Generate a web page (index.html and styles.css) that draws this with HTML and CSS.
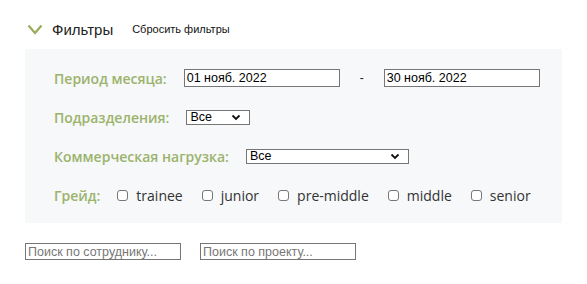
FILE: index.html
```html
<!DOCTYPE html>
<html lang="ru">
<head>
<meta charset="utf-8">
<link rel="stylesheet" href="styles.css">
</head>
<body>
<div class="page">
  <div class="head">
    <svg class="chev" width="16" height="11" viewBox="0 0 16 11"><path d="M1.5 1.5 L8 9 L14.5 1.5" fill="none" stroke="#9aab5c" stroke-width="2.2"/></svg>
    <span class="title">Фильтры</span>
    <span class="reset">Сбросить фильтры</span>
  </div>
  <div class="panel">
    <div class="row">
      <span class="label">Период месяца:</span>
      <input class="date" type="text" value="01 нояб. 2022">
      <span class="dash">-</span>
      <input class="date" type="text" value="30 нояб. 2022">
    </div>
    <div class="row">
      <span class="label">Подразделения:</span>
      <div class="sel sel-small"><span>Все</span><svg width="10" height="7" viewBox="0 0 10 7"><path d="M1.5 1.5 L5 5 L8.5 1.5" fill="none" stroke="#111" stroke-width="1.8"/></svg></div>
    </div>
    <div class="row">
      <span class="label">Коммерческая нагрузка:</span>
      <div class="sel sel-wide"><span>Все</span><svg width="10" height="7" viewBox="0 0 10 7"><path d="M1.5 1.5 L5 5 L8.5 1.5" fill="none" stroke="#111" stroke-width="1.8"/></svg></div>
    </div>
    <div class="row">
      <span class="label">Грейд:</span>
      <label class="cb"><span class="box"></span>trainee</label>
      <label class="cb"><span class="box"></span>junior</label>
      <label class="cb"><span class="box"></span>pre-middle</label>
      <label class="cb"><span class="box"></span>middle</label>
      <label class="cb"><span class="box"></span>senior</label>
    </div>
  </div>
  <div class="search">
    <input class="sinput" type="text" placeholder="Поиск по сотруднику...">
    <input class="sinput" type="text" placeholder="Поиск по проекту...">
  </div>
</div>
</body>
</html>
```
FILE: styles.css
```css
html, body { margin: 0; padding: 0; background: #fff; }
.page { padding: 20px 25px 0 25px; font-family: "Liberation Sans", Arial, sans-serif; }
.head { display: flex; align-items: center; height: 18px; padding-left: 2px; }
.chev { display: block; margin-right: 9px; margin-top: 1px; }
.title { font-size: 15px; color: #222; margin-right: 19px; }
.reset { font-size: 11px; color: #111; }
.panel { margin-top: 11px; width: 537px; box-sizing: border-box; background: #f6f8fa; padding: 19px 29px 18px 29px; display: flex; flex-direction: column; gap: 19px; }
.row { display: flex; align-items: center; height: 20px; white-space: nowrap; }
.label { font-family: "Open Sans", sans-serif; font-weight: 600; font-size: 14px; color: #9cb36c; margin-right: 17px; white-space: nowrap; flex-shrink: 0; }
.date { width: 156px; height: 18px; box-sizing: border-box; border: 1px solid #767676; background: #fff; font-family: "Liberation Sans", Arial, sans-serif; font-size: 12.5px; padding: 0 2px; color: #000; margin: 0; flex-shrink: 0; }
.dash { width: 44px; text-align: center; font-size: 12px; color: #222; flex-shrink: 0; }
.sel { display: flex; align-items: center; justify-content: space-between; box-sizing: border-box; height: 15px; border: 1px solid #767676; background: #fff; font-size: 12.5px; color: #000; padding: 0 8px 0 3px; flex-shrink: 0; }
.sel-small { width: 64px; }
.sel-wide { width: 163px; }
.cb { display: flex; align-items: center; font-family: "Open Sans", sans-serif; font-size: 14px; color: #333; margin-right: 19px; white-space: nowrap; flex-shrink: 0; }
.box { width: 9px; height: 9px; border: 1px solid #777; border-radius: 3px; background: #fff; margin-right: 8px; margin-top: 1px; flex-shrink: 0; }
.search { display: flex; gap: 19px; margin-top: 20px; }
.sinput { width: 156px; height: 17px; box-sizing: border-box; border: 1px solid #767676; font-family: "Liberation Sans", Arial, sans-serif; font-size: 12.5px; padding: 0 2px; margin: 0; background: #fff; }
.sinput::placeholder { color: #777; }
```
